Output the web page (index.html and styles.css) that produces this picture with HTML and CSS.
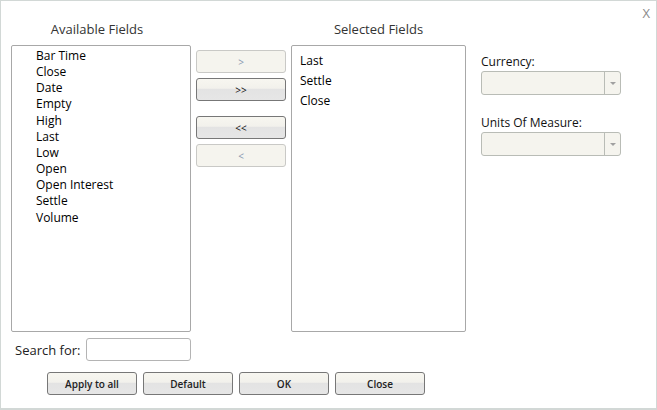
FILE: index.html
```html
<!DOCTYPE html>
<html>
<head>
<meta charset="utf-8">
<link rel="stylesheet" href="styles.css">
</head>
<body>
<div class="dialog">
  <div class="close-x">X</div>
  <div class="main">
    <div class="col-avail">
      <div class="title title-avail">Available Fields</div>
      <div class="list list-avail">
        <div>Bar Time</div>
        <div>Close</div>
        <div>Date</div>
        <div>Empty</div>
        <div>High</div>
        <div>Last</div>
        <div>Low</div>
        <div>Open</div>
        <div>Open Interest</div>
        <div>Settle</div>
        <div>Volume</div>
      </div>
      <div class="search-row">
        <span class="search-label">Search for:</span>
        <input class="search-input" type="text">
      </div>
    </div>
    <div class="col-buttons">
      <div class="btn btn-disabled">&gt;</div>
      <div class="btn btn-enabled">&gt;&gt;</div>
      <div class="btn btn-enabled gap-top">&lt;&lt;</div>
      <div class="btn btn-disabled">&lt;</div>
    </div>
    <div class="col-sel">
      <div class="title">Selected Fields</div>
      <div class="list list-sel">
        <div>Last</div>
        <div>Settle</div>
        <div>Close</div>
      </div>
    </div>
    <div class="col-right">
      <div class="field-label">Currency:</div>
      <div class="combo"><span class="combo-arrow"></span></div>
      <div class="field-label second">Units Of Measure:</div>
      <div class="combo"><span class="combo-arrow"></span></div>
    </div>
  </div>
  <div class="bottom-buttons">
    <div class="btn btn-enabled btn-bottom">Apply to all</div>
    <div class="btn btn-enabled btn-bottom">Default</div>
    <div class="btn btn-enabled btn-bottom">OK</div>
    <div class="btn btn-enabled btn-bottom">Close</div>
  </div>
</div>
</body>
</html>
```
FILE: styles.css
```css
* { box-sizing: border-box; }
html, body { margin: 0; padding: 0; background: #ffffff; }
body {
  font-family: "Open Sans", "Noto Sans", sans-serif;
  font-size: 12px;
  color: #000;
}
.dialog {
  position: relative;
  width: 657px;
  height: 410px;
  border: 1px solid #d2d8d6;
  border-bottom-width: 2px;
  background: #fff;
}
.close-x {
  position: absolute;
  right: 6px;
  top: 4px;
  font-size: 13px;
  color: #8a8a8a;
  line-height: 16px;
}
.main {
  display: flex;
  padding-left: 10px;
}
.title {
  padding-top: 18px;
  height: 44px;
  line-height: 20px;
  text-align: center;
  font-size: 13px;
  color: #333;
}
.title-avail { padding-right: 8px; }
.col-avail { width: 180px; }
.list {
  border: 1px solid #a8a8a8;
  border-radius: 2px;
  height: 287px;
  background: #fff;
}
.list-avail {
  padding: 2px 0 0 24px;
  line-height: 16.15px;
}
.list-sel {
  padding: 5px 0 0 8px;
  line-height: 20px;
}
.search-row {
  display: flex;
  align-items: center;
  justify-content: space-between;
  margin-top: 6px;
  padding-left: 4px;
}
.search-label { font-size: 13px; color: #222; }
.search-input {
  width: 105px;
  height: 23px;
  border: 1px solid #b4b4b4;
  border-radius: 3px;
  background: #fff;
  margin: 0;
  padding: 0;
}
.col-buttons {
  width: 90px;
  margin-left: 5px;
  padding-top: 49px;
  display: flex;
  flex-direction: column;
  gap: 5px;
}
.btn {
  height: 23px;
  border-radius: 3px;
  display: flex;
  align-items: center;
  justify-content: center;
  font-size: 10px;
}
.btn-disabled {
  background: #f5f4ee;
  border: 1px solid #c9c9c6;
  color: #8898b0;
}
.btn-enabled {
  border: 1px solid #777;
  color: #111;
  background: linear-gradient(to bottom, #f7f6f0 0%, #f2f1ec 45%, #e3e3e3 46%, #e6e6e6 100%);
}
.gap-top { margin-top: 10px; }
.col-sel {
  width: 175px;
  margin-left: 5px;
}
.col-right {
  width: 140px;
  margin-left: 15px;
  padding-top: 53px;
}
.field-label {
  line-height: 16px;
  color: #111;
  margin-bottom: 1px;
}
.field-label.second { margin-top: 20px; }
.combo {
  height: 24px;
  border: 1px solid #b9bcb6;
  border-radius: 3px;
  background: #f5f4ee;
  display: flex;
  justify-content: flex-end;
}
.combo-arrow {
  width: 16px;
  border-left: 1px solid #b9bcb6;
  display: flex;
  align-items: center;
  justify-content: center;
}
.combo-arrow::after {
  content: "";
  width: 0;
  height: 0;
  border-left: 3px solid transparent;
  border-right: 3px solid transparent;
  border-top: 3px solid #a0a0a0;
}
.bottom-buttons {
  display: flex;
  gap: 6px;
  margin-top: 11px;
  padding-left: 46px;
}
.btn-bottom {
  width: 90px;
  font-weight: 600;
  font-size: 10px;
  color: #222;
}
```
